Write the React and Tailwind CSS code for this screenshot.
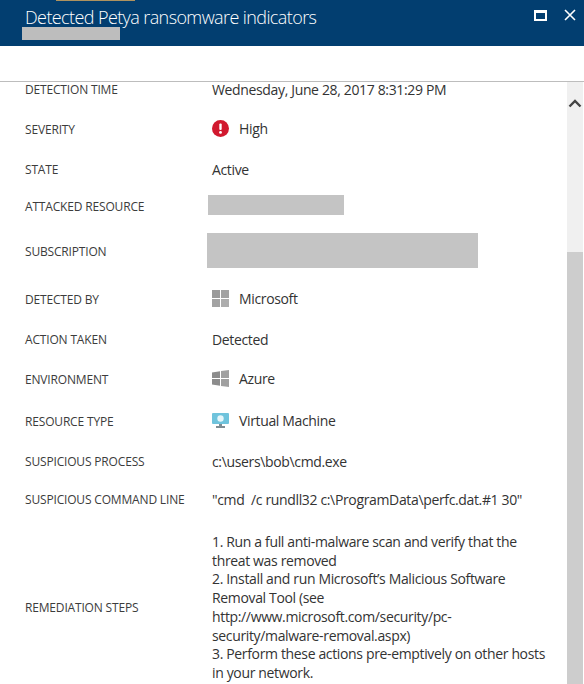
const rows = [
  { label: 'SEVERITY', h: 'h-10', value: 'High', icon: 'alert' },
  { label: 'STATE', h: 'h-10', value: 'Active' },
  { label: 'ATTACKED RESOURCE', h: 'h-[34px]', block: 'w-[136px] h-5 ml-[-4px]' },
  { label: 'SUBSCRIPTION', h: 'h-[56px]', block: 'w-[271px] h-[35px] ml-[-5px]' },
  { label: 'DETECTED BY', h: 'h-10', value: 'Microsoft', icon: 'grid' },
  { label: 'ACTION TAKEN', h: 'h-10', value: 'Detected' },
  { label: 'ENVIRONMENT', h: 'h-10', value: 'Azure', icon: 'windows' },
  { label: 'RESOURCE TYPE', h: 'h-[44px]', value: 'Virtual Machine', icon: 'vm' },
  { label: 'SUSPICIOUS PROCESS', h: 'h-9', value: 'c:\\users\\bob\\cmd.exe' },
  { label: 'SUSPICIOUS COMMAND LINE', h: 'h-10', value: '"cmd  /c rundll32 c:\\ProgramData\\perfc.dat.#1 30"' },
]

const steps = [
  '1. Run a full anti-malware scan and verify that the threat was removed',
  '2. Install and run Microsoft’s Malicious Software Removal Tool (see http://www.microsoft.com/security/pc-security/malware-removal.aspx)',
  '3. Perform these actions pre-emptively on other hosts in your network.',
]

function RowIcon({ type }) {
  if (type === 'alert') {
    return (
      <svg width="17" height="17" viewBox="0 0 17 17" className="shrink-0">
        <circle cx="8.5" cy="8.5" r="8.5" fill="#d1192f" />
        <rect x="7.3" y="3.5" width="2.4" height="6.5" rx="1" fill="#fff" />
        <circle cx="8.5" cy="12.4" r="1.4" fill="#fff" />
      </svg>
    )
  }
  if (type === 'grid') {
    return (
      <svg width="17" height="17" viewBox="0 0 17 17" className="shrink-0">
        <rect width="8" height="8" fill="#9a9a9a" />
        <rect x="9" width="8" height="8" fill="#a3a3a3" />
        <rect y="9" width="8" height="8" fill="#a3a3a3" />
        <rect x="9" y="9" width="8" height="8" fill="#adadad" />
      </svg>
    )
  }
  if (type === 'windows') {
    return (
      <svg width="17" height="17" viewBox="0 0 17 17" className="shrink-0">
        <path d="M0 2.5 8 1.2V8H0Z" fill="#8c8c8c" />
        <path d="M9 1 17 0V8H9Z" fill="#a0a0a0" />
        <path d="M0 9H8V15.8L0 14.5Z" fill="#8c8c8c" />
        <path d="M9 9H17V17L9 16Z" fill="#a0a0a0" />
      </svg>
    )
  }
  return (
    <svg width="17" height="17" viewBox="0 0 17 17" className="shrink-0">
      <rect y="1" width="17" height="11" rx="1" fill="#6fc3dc" />
      <circle cx="8.5" cy="6.5" r="3.2" fill="#e6f6fa" />
      <rect x="7" y="12" width="3" height="2" fill="#7f8c92" />
      <rect x="4" y="14" width="9" height="2" fill="#7f8c92" />
    </svg>
  )
}

function Row({ label, h, value, icon, block }) {
  return (
    <div className={`flex items-center ${h}`}>
      <div className="w-[187px] shrink-0 pt-[2px] text-[12px] tracking-[-0.17px] text-[#3c3c3c]">{label}</div>
      {block ? (
        <div className={`bg-[#c4c4c4] mb-[2px] ${block}`} />
      ) : (
        <div className={`flex items-center gap-[10px] text-[14px] tracking-[-0.35px] text-[#333] whitespace-pre ${icon ? 'pb-[2px]' : ''}`}>
          {icon && <RowIcon type={icon} />}
          <span>{value}</span>
        </div>
      )}
    </div>
  )
}

export default function App() {
  return (
    <div className="w-[584px] h-[684px] overflow-hidden bg-white font-['Open_Sans',sans-serif] flex flex-col">
      <header className="h-[46px] shrink-0 bg-[#023e70] flex flex-col text-white">
        <div className="h-px w-[79px] ml-[56px] bg-[#b0935f]" />
        <div className="flex-1 flex items-start pl-[25px] pr-[8px]">
          <div className="flex-1">
            <h1 className="text-[18px] font-light leading-[24px] mt-[4px] tracking-[-0.6px]">Detected Petya ransomware indicators</h1>
            <div className="w-[98px] h-[13px] ml-[-3px] mt-[-2px] bg-[#bdbdbd]" />
          </div>
          <div className="flex items-center gap-[17px] mt-[8px]">
            <svg width="13" height="11" viewBox="0 0 13 11">
              <rect x="1" y="1" width="11" height="9" fill="none" stroke="#fff" strokeWidth="2" />
              <rect x="1" y="1" width="11" height="2" fill="#fff" />
            </svg>
            <svg width="12" height="12" viewBox="0 0 12 12">
              <path d="M1 1 11 11M11 1 1 11" stroke="#fff" strokeWidth="1.6" />
            </svg>
          </div>
        </div>
      </header>
      <div className="h-9 shrink-0 border-b border-[#bdbdbd]" />
      <div className="flex-1 flex min-h-0">
        <main className="flex-1 pl-[25px] min-w-0">
          <div className="flex h-[27px] items-start">
            <div className="w-[187px] shrink-0 leading-[15px] text-[12px] tracking-[-0.17px] text-[#3c3c3c]">DETECTION TIME</div>
            <div className="text-[14px] leading-[15px] tracking-[-0.35px] text-[#333]">Wednesday, June 28, 2017 8:31:29 PM</div>
          </div>
          {rows.map(r => <Row key={r.label} {...r} />)}
          <div className="flex items-center mt-[14px]">
            <div className="w-[187px] shrink-0 text-[12px] tracking-[-0.17px] text-[#3c3c3c]">REMEDIATION STEPS</div>
            <div className="w-[336px] text-[14px] leading-[18.7px] tracking-[-0.35px] text-[#333]">
              {steps.map(s => <p key={s} className="break-words">{s}</p>)}
            </div>
          </div>
        </main>
        <aside className="w-[16px] mr-[1px] shrink-0 bg-[#f0f0f0] flex flex-col">
          <div className="h-[170px] flex justify-center pt-[17px]">
            <svg width="14" height="9" viewBox="0 0 14 9">
              <path d="M1.5 7.5 7 2l5.5 5.5" fill="none" stroke="#444" strokeWidth="2.4" />
            </svg>
          </div>
          <div className="flex-1 bg-[#cdcdcd]" />
        </aside>
      </div>
    </div>
  )
}
